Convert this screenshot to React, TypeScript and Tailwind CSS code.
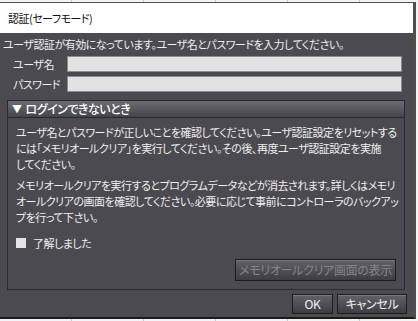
import React from 'react';

const font = "font-['Meiryo_UI','Noto_Sans_CJK_JP',sans-serif] [font-feature-settings:'palt']";

function GridStrip({ className }: { className: string }) {
  return (
    <div className={`flex bg-[#f3f3f3] ${className}`}>
      {[0, 1, 2, 3, 4, 5].map((i) => (
        <div key={i} className="w-[72px] shrink-0 border-r border-[#c8c8c8]"></div>
      ))}
    </div>
  );
}

function DarkButton({ children, className, disabled }: { children: React.ReactNode; className: string; disabled?: boolean }) {
  return (
    <button
      className={`flex items-center justify-center border border-[#1c1c1f] bg-gradient-to-b from-[#626268] to-[#3d3d42] shadow-[inset_0_1px_0_#7a7a80] text-[12px] tracking-[-0.3px] whitespace-nowrap ${
        disabled ? 'text-[#85858a]' : 'text-[#f2f2f2]'
      } ${className}`}
    >
      {children}
    </button>
  );
}

export default function App() {
  return (
    <div className={`w-[418px] h-[321px] bg-[#f3f3f3] overflow-hidden flex flex-col ${font}`}>
      <GridStrip className="h-[2px]" />
      <div className="flex">
        <div className="w-[416px] h-[317px] border-t border-r-[3px] border-b-[2px] border-[#4e4e4e] border-b-[#1a1a1a] flex flex-col">
          <div className="h-[30px] bg-white flex items-center pl-[8px] text-[11px] tracking-[-0.5px] text-[#111]">認証(セーフモード)</div>
          <div className="flex-1 bg-[#4b4a50] text-[#efefef] text-[11px] tracking-[-0.5px] leading-[16px] flex flex-col pl-[7px] pr-[8px]">
            <div className="pt-[3px] -ml-[4px] whitespace-nowrap">ユーザ認証が有効になっています。ユーザ名とパスワードを入力してください。</div>
            <div className="mt-[4px] flex flex-col gap-[4px]">
              <div className="flex items-center h-[16px]">
                <span className="w-[60px] pl-[6px] whitespace-nowrap">ユーザ名</span>
                <div className="flex-1 h-[16px] mr-[3px] bg-[#e2e2e4] border border-[#8c8c90]"></div>
              </div>
              <div className="flex items-center h-[16px]">
                <span className="w-[60px] pl-[6px] whitespace-nowrap">パスワード</span>
                <div className="flex-1 h-[16px] mr-[3px] bg-[#e2e2e4] border border-[#8c8c90]"></div>
              </div>
            </div>
            <div className="mt-[8px] h-[190px] border border-[#2c2c30] border-t-0 flex flex-col">
              <div className="h-[18px] -mx-px border border-[#2a2a2e] bg-gradient-to-b from-[#6c6c72] to-[#44444a] flex items-center pl-[4px] text-white text-[12px] font-medium">
                <span className="text-[10px] mr-[4px]">▼</span>ログインできないとき
              </div>
              <div className="pl-[8px] pr-[8px] pt-[6px] flex flex-col whitespace-nowrap">
                <div>
                  ユーザ名とパスワードが正しいことを確認してください。ユーザ認証設定をリセットする
                  <br />
                  には「メモリオールクリア」を実行してください。その後、再度ユーザ認証設定を実施
                  <br />
                  してください。
                </div>
                <div className="mt-[5px]">
                  メモリオールクリアを実行するとプログラムデータなどが消去されます。詳しくはメモリ
                  <br />
                  オールクリアの画面を確認してください。必要に応じて事前にコントローラのバックアッ
                  <br />
                  プを行って下さい。
                </div>
                <div className="mt-[10px] flex items-center gap-[7px]">
                  <div className="w-[10px] h-[10px] bg-[#e4e4e4]"></div>
                  <span>了解しました</span>
                </div>
                <div className="mt-[8px] flex justify-end">
                  <DarkButton className="w-[161px] h-[22px]" disabled>
                    メモリオールクリア画面の表示
                  </DarkButton>
                </div>
              </div>
            </div>
            <div className="mt-[4px] flex justify-end gap-[4px] -mr-[2px]">
              <DarkButton className="w-[41px] h-[20px]">OK</DarkButton>
              <DarkButton className="w-[70px] h-[20px]">キャンセル</DarkButton>
            </div>
          </div>
        </div>
        <div className="flex-1 bg-[#f3f3f3]"></div>
      </div>
      <GridStrip className="flex-1" />
    </div>
  );
}
